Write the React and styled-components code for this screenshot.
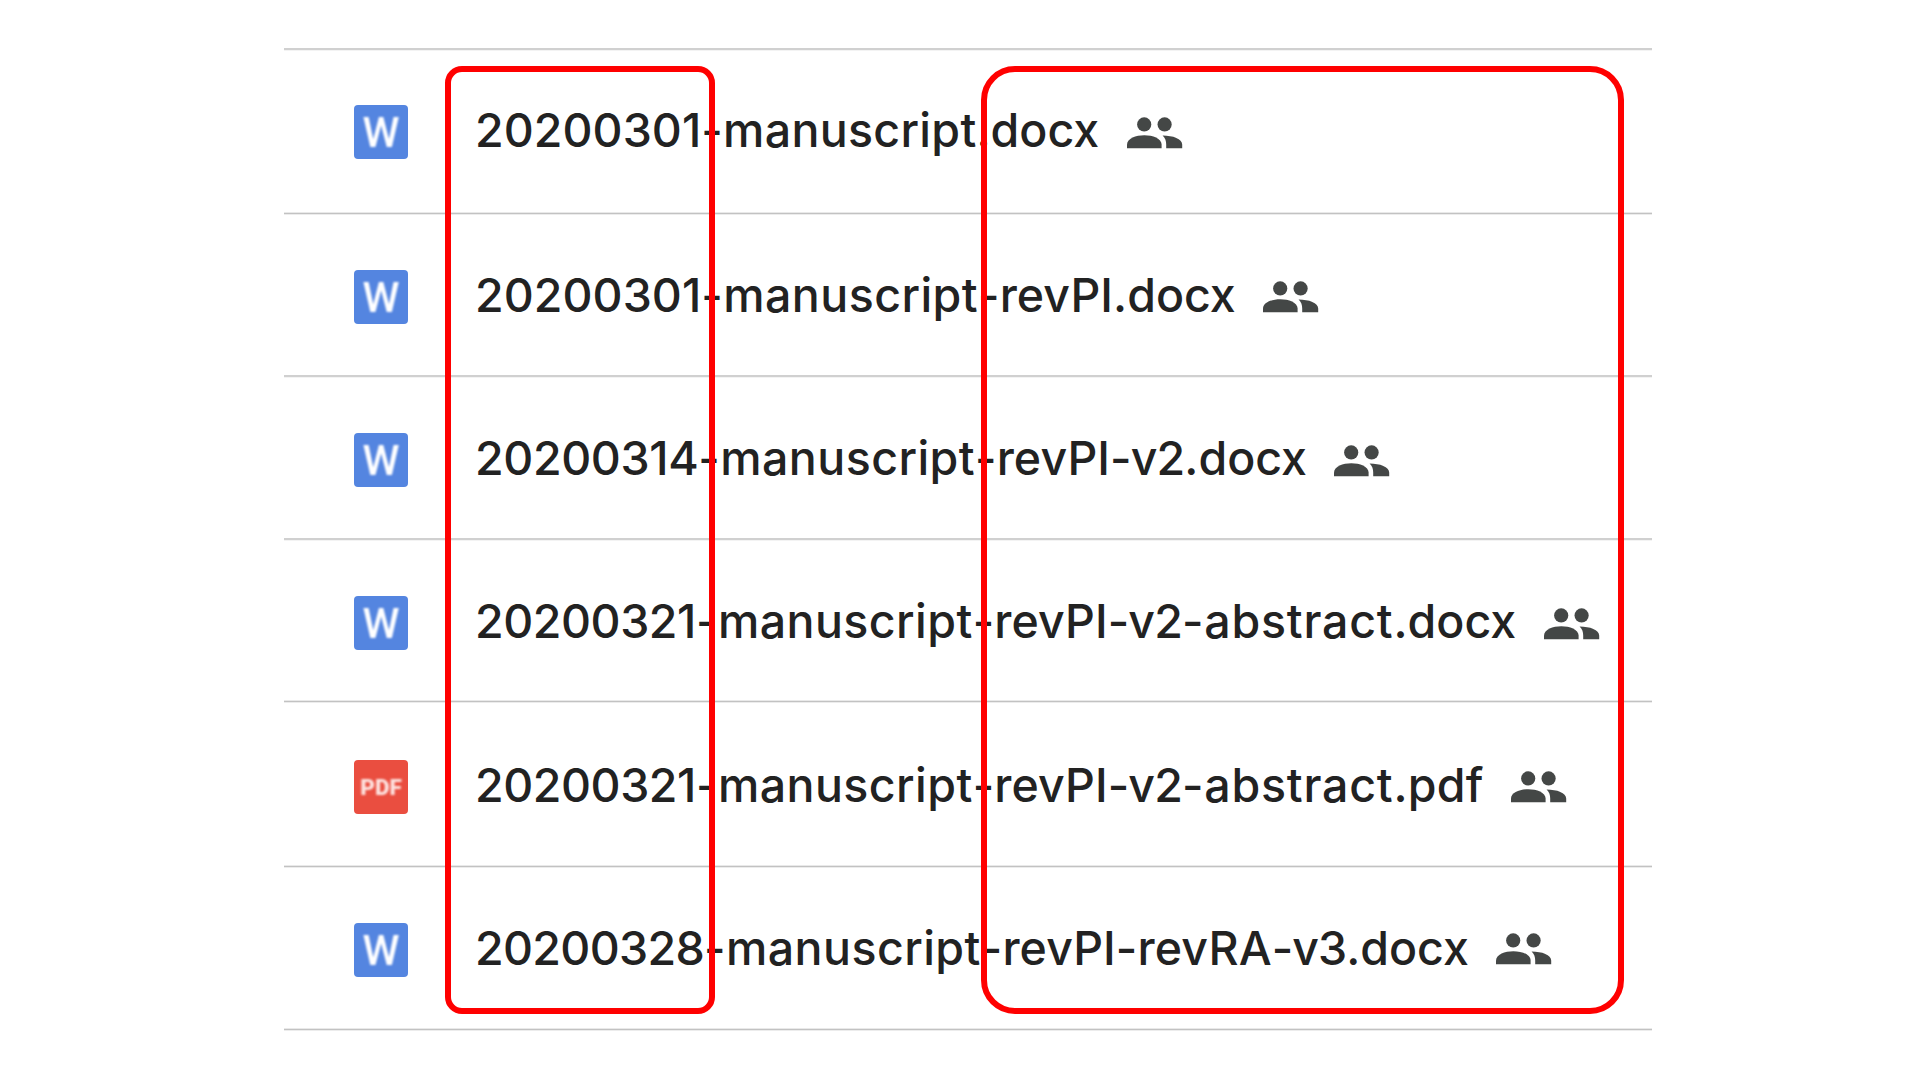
import React from 'react';
import styled, { createGlobalStyle } from 'styled-components';

const GlobalStyle = createGlobalStyle`
  body {
    margin: 0;
    background: #fff;
    overflow: hidden;
  }
`;

const Page = styled.main`
  position: relative;
  box-sizing: border-box;
  width: 1920px;
  height: 1080px;
  padding: 48px 268px 0 284px;
  background: #fff;
`;

const FileList = styled.div`
  display: flex;
  flex-direction: column;
`;

const Divider = styled.div`
  height: 3px;
  background: ${p => p.$fine
    ? 'linear-gradient(#e9e9e9 1px, #c2c2c2 1px 2px, #ececec 2px)'
    : 'linear-gradient(#d0d0d0 2px, #f3f3f3 2px)'};
`;

const FileRow = styled.div`
  box-sizing: border-box;
  display: flex;
  align-items: flex-start;
  height: ${p => p.$height}px;
  padding: ${p => p.$inset}px 0 0 70px;
`;

const TypeBadge = styled.div`
  display: flex;
  flex: none;
  align-items: center;
  justify-content: center;
  width: 54px;
  height: 54px;
  border-radius: 4px;
  background: ${p => (p.$pdf ? '#ea4e40' : '#5485e0')};
`;

const TypeLabel = styled.span`
  padding-top: ${p => (p.$pdf ? 0 : 2)}px;
  font-family: Roboto, "Liberation Sans", sans-serif;
  font-size: ${p => (p.$pdf ? 22.5 : 42)}px;
  font-weight: ${p => (p.$pdf ? 900 : 500)};
  line-height: 54px;
  color: ${p => (p.$pdf ? '#fde3e0' : '#fff')};
  filter: blur(1px);
`;

const FileName = styled.div`
  margin: -2px 0 0 67px;
  font-family: Inter, Roboto, sans-serif;
  font-size: 46.5px;
  font-weight: 500;
  line-height: 54px;
  color: #222;
  white-space: nowrap;
`;

const Part = styled.span`
  letter-spacing: ${p => p.$track}px;
`;

const PeopleSvg = styled.svg`
  flex: none;
  width: 56px;
  height: 32px;
  margin: ${p => p.$drop}px 0 0 27.5px;
  fill: #444746;
`;

const Highlight = styled.div`
  position: absolute;
  box-sizing: border-box;
  top: 66px;
  left: ${p => p.$left}px;
  width: ${p => p.$width}px;
  height: 947.5px;
  border: 6px solid #f00;
  border-radius: ${p => p.$radius}px;
`;

const TRACKING = {
  '-manuscript': 0.44,
  '-revPI': 0.1,
  '-revRA': 0.15,
  '-v2': -0.9,
  '-v3': -1,
  '-abstract': 0.8,
  '.docx': 0,
  '.pdf': 0.2,
};

const FILES = [
  { date: '20200301', track: 0.06, parts: ['-manuscript', '.docx'], height: 161, inset: 54, drop: 12, extra: { '-manuscript': 0.3 } },
  { date: '20200301', track: 0.06, parts: ['-manuscript', '-revPI', '.docx'], height: 160, inset: 55, drop: 10.5, fine: true },
  { date: '20200314', track: -0.375, parts: ['-manuscript', '-revPI', '-v2', '.docx'], height: 160, inset: 55, drop: 12 },
  { date: '20200321', track: -0.44, parts: ['-manuscript', '-revPI', '-v2', '-abstract', '.docx'], height: 159, inset: 54.5, drop: 12 },
  { date: '20200321', track: -0.44, parts: ['-manuscript', '-revPI', '-v2', '-abstract', '.pdf'], height: 162, inset: 57, drop: 10.5, fine: true, pdf: true },
  { date: '20200328', track: -0.67, parts: ['-manuscript', '-revPI', '-revRA', '-v3', '.docx'], height: 160, inset: 55, drop: 10, fine: true },
];

function PeopleIcon({ drop }) {
  return (
    <PeopleSvg $drop={drop} viewBox="0 0 56 32" aria-hidden="true">
      <circle cx="17.2" cy="7.4" r="7.1" />
      <circle cx="37.6" cy="7.4" r="7.1" />
      <path d="M0 31.2V27.5C0 21.4 9 18.2 17.3 18.2S34.6 21.4 34.6 27.5V31.2Z" />
      <path d="M35.6 18.4C46 18.5 55.2 21.6 55.2 27.5V31.2H39.2V27.5C39.2 23.8 38.2 20.8 35.6 18.4Z" />
    </PeopleSvg>
  );
}

export default function App() {
  return (
    <>
      <GlobalStyle />
      <Page>
        <FileList>
          {FILES.map((file, i) => (
            <React.Fragment key={i}>
              <Divider $fine={file.fine} />
              <FileRow $height={file.height} $inset={file.inset}>
                <TypeBadge $pdf={file.pdf}>
                  <TypeLabel $pdf={file.pdf}>{file.pdf ? 'PDF' : 'W'}</TypeLabel>
                </TypeBadge>
                <FileName>
                  <Part $track={file.track}>{file.date}</Part>
                  {file.parts.map(part => (
                    <Part key={part} $track={file.extra?.[part] ?? TRACKING[part]}>{part}</Part>
                  ))}
                </FileName>
                <PeopleIcon drop={file.drop} />
              </FileRow>
            </React.Fragment>
          ))}
          <Divider $fine />
        </FileList>
        <Highlight $left={444.6} $width={270} $radius={17} />
        <Highlight $left={980.6} $width={643.6} $radius={34} />
      </Page>
    </>
  );
}
